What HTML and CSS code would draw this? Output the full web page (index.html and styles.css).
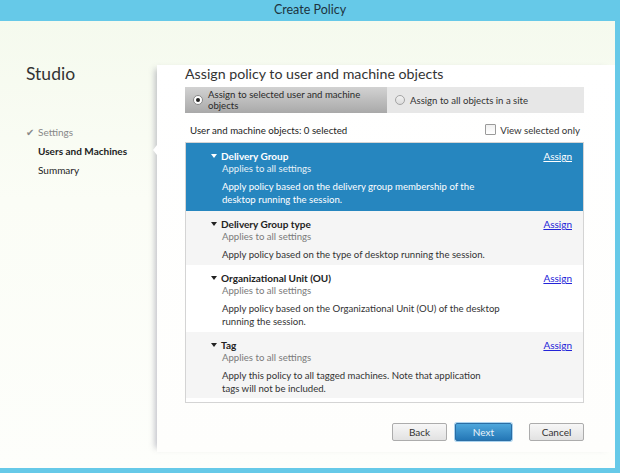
FILE: index.html
```html
<!DOCTYPE html>
<html>
<head>
<meta charset="utf-8">
<link rel="stylesheet" href="styles.css">
</head>
<body>
<div class="window">
  <div class="titlebar">Create Policy</div>
  <div class="client">
    <aside class="sidebar">
      <div class="brand">Studio</div>
      <ul class="steps">
        <li class="done"><span class="check">✔</span>Settings</li>
        <li class="current">Users and Machines</li>
        <li>Summary</li>
      </ul>
    </aside>
    <main class="main">
      <span class="pointer"></span>
      <h1 class="heading">Assign policy to user and machine objects</h1>
      <div class="segments">
        <div class="seg seg-on"><span class="radio radio-on"></span><span>Assign to selected user and machine<br>objects</span></div>
        <div class="seg"><span class="radio"></span><span>Assign to all objects in a site</span></div>
      </div>
      <div class="listhead">
        <span>User and machine objects: 0 selected</span>
        <label class="viewonly"><span class="checkbox"></span>View selected only</label>
      </div>
      <div class="list">
        <div class="item selected">
          <div class="item-top"><span class="tri"></span><span class="title">Delivery Group</span><a class="assign">Assign</a></div>
          <div class="applies">Applies to all settings</div>
          <div class="desc">Apply policy based on the delivery group membership of the<br>desktop running the session.</div>
        </div>
        <div class="item alt">
          <div class="item-top"><span class="tri"></span><span class="title">Delivery Group type</span><a class="assign">Assign</a></div>
          <div class="applies">Applies to all settings</div>
          <div class="desc">Apply policy based on the type of desktop running the session.</div>
        </div>
        <div class="item">
          <div class="item-top"><span class="tri"></span><span class="title">Organizational Unit (OU)</span><a class="assign">Assign</a></div>
          <div class="applies">Applies to all settings</div>
          <div class="desc">Apply policy based on the Organizational Unit (OU) of the desktop<br>running the session.</div>
        </div>
        <div class="item alt">
          <div class="item-top"><span class="tri"></span><span class="title">Tag</span><a class="assign">Assign</a></div>
          <div class="applies">Applies to all settings</div>
          <div class="desc">Apply this policy to all tagged machines. Note that application<br>tags will not be included.</div>
        </div>
      </div>
      <div class="buttons">
        <button class="btn">Back</button>
        <button class="btn btn-primary">Next</button>
        <button class="btn btn-cancel">Cancel</button>
      </div>
    </main>
  </div>
</div>
</body>
</html>
```
FILE: styles.css
```css
* { box-sizing: border-box; }
html, body { margin: 0; padding: 0; }
body {
  width: 620px;
  height: 473px;
  background: #66c9e8;
  font-family: Lato, "Open Sans", sans-serif;
  color: #333;
  overflow: hidden;
}
.window {
  width: 620px;
  height: 473px;
  display: flex;
  flex-direction: column;
}
.titlebar {
  height: 21px;
  line-height: 20px;
  text-align: center;
  font-size: 12.5px;
  color: #1d3340;
}
.client {
  flex: 1;
  margin: 0 5px 5px 0;
  display: flex;
  background: linear-gradient(180deg, #f5faee 0%, #fbfdf6 40%, #fdfefb 100%);
}
.sidebar {
  width: 157px;
  flex: none;
  padding: 42px 0 0 26px;
}
.brand {
  font-size: 17.5px;
  color: #333;
  line-height: 22px;
}
.steps {
  list-style: none;
  margin: 38px 0 0 0;
  padding: 0;
  font-size: 10px;
}
.steps li {
  padding-left: 12px;
  line-height: 19px;
  color: #222;
  position: relative;
}
.steps li.done { color: #888; }
.check {
  position: absolute;
  left: 0;
  top: 0;
  font-size: 9.5px;
  color: #8a8a8a;
}
.steps li.current { font-weight: 700; color: #222; }
.main {
  flex: 1;
  position: relative;
  margin: 44px 0 16px 0;
  padding: 0 31px 0 28px;
  background: linear-gradient(180deg, #ffffff, #fefefc);
  box-shadow: -6px 0 6px -4px rgba(120,120,140,0.45);
  display: flex;
  flex-direction: column;
}
.pointer {
  position: absolute;
  left: -4px;
  top: 80px;
  width: 0;
  height: 0;
  border-top: 5px solid transparent;
  border-bottom: 5px solid transparent;
  border-right: 4px solid #fff;
}
.heading {
  margin: 0;
  margin-top: -1px;
  font-size: 14.2px;
  font-weight: 400;
  line-height: 20px;
  color: #333;
}
.segments {
  display: flex;
  height: 26px;
  margin-top: 3px;
  background: #e7e7e7;
  font-size: 9.6px;
  color: #333;
}
.seg {
  display: flex;
  align-items: center;
  gap: 5px;
  padding-left: 8px;
  line-height: 11px;
  flex: 1;
}
.seg-on {
  flex: none;
  width: 202px;
  background: linear-gradient(180deg, #d2d2d2, #a9a9a9);
  color: #2a2a2a;
}
.radio {
  width: 10px;
  height: 10px;
  border-radius: 50%;
  border: 1px solid #a4a4a4;
  background: linear-gradient(180deg, #f2f2f2, #dcdcdc);
  flex: none;
  position: relative;
}
.radio-on { background: #fff; border-color: #888; }
.radio-on::after {
  content: "";
  position: absolute;
  left: 2px;
  top: 2px;
  width: 4px;
  height: 4px;
  border-radius: 50%;
  background: #222;
}
.listhead {
  display: flex;
  justify-content: space-between;
  align-items: center;
  height: 29px;
  padding: 4px 4px 0 5px;
  font-size: 9.7px;
  color: #222;
}
.viewonly { display: flex; align-items: center; gap: 4px; color: #333; }
.checkbox {
  width: 11px;
  height: 11px;
  border: 1px solid #9a9a9a;
  background: linear-gradient(180deg, #f0f0f0, #ffffff);
  border-radius: 1px;
}
.list {
  border: 1px solid #d4d4d4;
  height: 261px;
  padding: 0 0 4px 0;
  background: #fff;
}
.item {
  padding: 7px 11px 8px 25px;
  font-size: 9.6px;
  line-height: 12.5px;
}
.item.alt { background: #f5f5f5; }
.item.selected {
  background: #2686bf;
  color: #fff;
  height: 68px;
}
.item-top { display: flex; align-items: center; }
.tri {
  width: 0;
  height: 0;
  border-left: 3.5px solid transparent;
  border-right: 3.5px solid transparent;
  border-top: 4px solid #222;
  margin-right: 4px;
}
.selected .tri { border-top-color: #fff; }
.title { font-weight: 700; font-size: 10px; color: #222; flex: 1; }
.selected .title { color: #fff; }
.assign {
  color: #2424d8;
  text-decoration: underline;
  font-size: 10px;
}
.selected .assign { color: #fff; }
.applies { padding-left: 11px; color: #7a7a7a; }
.selected .applies { color: #e6f1f8; }
.desc { padding-left: 11px; margin-top: 6px; color: #333; }
.selected .desc { color: #fff; }
.item:nth-child(2) { height: 54px; }
.item:nth-child(3) { height: 67px; }
.item:nth-child(4) { height: 66px; }
.buttons {
  display: flex;
  justify-content: flex-end;
  margin-top: 20px;
  gap: 8px;
}
.btn {
  width: 55px;
  height: 18px;
  font-family: inherit;
  font-size: 10px;
  color: #333;
  border: 1px solid #acacac;
  border-radius: 2px;
  background: linear-gradient(180deg, #f7f7f7, #e2e2e2);
  padding: 0;
  line-height: 16px;
}
.btn-primary {
  width: 57px;
  color: #e8f3fa;
  border-color: #2b6ea4;
  background: linear-gradient(180deg, #4ea7dc, #2477b6);
  box-shadow: 0 0 0 1px #aad3ef;
}
.btn-cancel { margin-left: 9px; }
```
